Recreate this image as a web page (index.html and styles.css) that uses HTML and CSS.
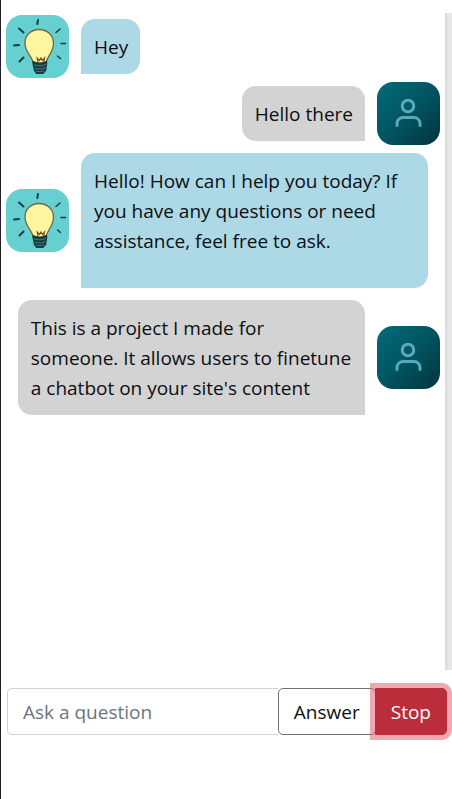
FILE: index.html
```
<!DOCTYPE html>
<html lang="en">
<head>
<meta charset="utf-8">
<meta name="viewport" content="width=device-width, initial-scale=1">
<title>Chat</title>
<link rel="stylesheet" href="styles.css">
</head>
<body>
<svg class="sprites" aria-hidden="true">
  <defs>
    <linearGradient id="teal" x1="0" y1="0" x2="1" y2="1">
      <stop offset="0" stop-color="#026b7a"/>
      <stop offset="0.5" stop-color="#025461"/>
      <stop offset="1" stop-color="#02343f"/>
    </linearGradient>
    <symbol id="bot" viewBox="0 0 63 63">
      <rect width="63" height="63" fill="#66cfcf"/>
      <g stroke="#143c4c" stroke-width="2" stroke-linecap="round" fill="none">
        <path d="M31.300 9l.7-4M13 13.500l4.500 4M8 30.500l5-.5M13.500 46.500l4-4"/>
        <path stroke-width="1.500" d="M50 17.500l4-3.500M55 28.500h4.500M51.500 41l3 2.500"/>
      </g>
      <path d="M27 48c-.3-7-8-10-8-20 0-8 6-13.500 14-13.500S47.500 20 47.500 28c0 10-6.500 13-7.500 20-3 2-10 2-13 0z" fill="#fdf5a0" stroke="#6e6847" stroke-width="1.300"/>
      <path d="M32 48l-.8-5 2.300 2.500 1.500-2.500 1.500 2.500 2-2.500-.8 5" fill="none" stroke="#75541f" stroke-width="1.200"/>
      <path d="M26.500 45.500c4 2.500 10 2.500 14.500 0l.3 3-1 7-3 3.500h-7L28 56l-1.500-7z" fill="#173b40"/>
      <path d="M28 49.800c4 1.500 8 1.500 12-.5M28.500 53c4 1.500 7 1.500 11-.5M30 56c3 1 5 1 8-.3" fill="none" stroke="#4f8f8e" stroke-width="0.800"/>
    </symbol>
    <symbol id="person" viewBox="0 0 63 63">
      <rect width="63" height="63" fill="url(#teal)"/>
      <g fill="none" stroke="#57a9bb" stroke-width="3" stroke-linecap="round">
        <circle cx="31" cy="24" r="5.800"/>
        <path d="M20 43.500v-2a6 6 0 0 1 6-6h11a6 6 0 0 1 6 6v2"/>
      </g>
    </symbol>
  </defs>
</svg>
<main class="app">
  <section class="chat" aria-label="Conversation">
    <div class="messages">
      <article class="message">
        <svg class="avatar" role="img" aria-label="Assistant"><use href="#bot"/></svg>
        <p class="bubble">Hey</p>
      </article>
      <article class="message message-user">
        <p class="bubble">Hello there</p>
        <svg class="avatar" role="img" aria-label="You"><use href="#person"/></svg>
      </article>
      <article class="message">
        <svg class="avatar" role="img" aria-label="Assistant"><use href="#bot"/></svg>
        <div class="bubble"><p class="reply">Hello! How can I help you today? If you have any questions or need assistance, feel free to ask.</p></div>
      </article>
      <article class="message message-user">
        <p class="bubble">This is a project I made for someone. It allows users to finetune a chatbot on your site's content</p>
        <svg class="avatar" role="img" aria-label="You"><use href="#person"/></svg>
      </article>
    </div>
    <div class="scroll-track"></div>
  </section>
  <form class="composer">
    <input class="question" type="text" placeholder="Ask a question" aria-label="Ask a question">
    <button class="btn btn-answer" type="button">Answer</button>
    <button class="btn btn-stop" type="button">Stop</button>
  </form>
</main>
</body>
</html>
```
FILE: styles.css
```
* {
  box-sizing: border-box;
}

body {
  margin: 0;
  background: #fff;
  color: #0c0f12;
  font: 19px/30px "Open Sans", "Noto Sans", sans-serif;
}

p {
  margin: 0;
}

.sprites {
  position: absolute;
  width: 0;
  height: 0;
}

.app {
  display: flex;
  flex-direction: column;
  min-height: 100vh;
  padding: 13px 0 64px;
  border-left: 1px solid #202024;
}

.chat {
  display: flex;
  flex: 1;
}

.messages {
  flex: 1;
  min-width: 0;
}

.message {
  display: flex;
  align-items: center;
  gap: 12px;
  padding: 0 5px;
}

.message-user {
  justify-content: flex-end;
}

.avatar {
  flex: none;
  width: 63px;
  height: 63px;
  border-radius: 16px;
}

.bubble {
  max-width: 80%;
  margin: 6px 0;
  padding: 13px 12px 12px 13px;
  border-radius: 14px 14px 14px 0;
  background: #add8e6;
}

.message-user .bubble {
  border-radius: 14px 14px 0 14px;
  background: #d3d3d3;
}

.reply {
  margin-bottom: 20px;
}

.scroll-track {
  width: 7px;
  background: linear-gradient(to right, #d9d9d9, #e8e8e8 4px);
}

.composer {
  display: flex;
  padding: 18px 5px 0 6px;
}

.question,
.btn {
  height: 47px;
  padding: 0 15px;
  border: 1px solid #ced4da;
  border-radius: 5px;
  background: #fff;
  color: inherit;
  font: inherit;
}

.question {
  flex: 1;
  min-width: 0;
  border-right: 0;
  border-radius: 5px 0 0 5px;
}

.question::placeholder {
  color: #6c757d;
  opacity: 1;
}

.btn-answer {
  border-color: #6c757d;
}

.btn-stop {
  margin-left: -1px;
  border-color: #b82c3a;
  border-radius: 0 5px 5px 0;
  background: #bb2d3b;
  color: #fff;
  box-shadow: 0 0 0 5px rgba(225, 83, 97, 0.5);
}
```
